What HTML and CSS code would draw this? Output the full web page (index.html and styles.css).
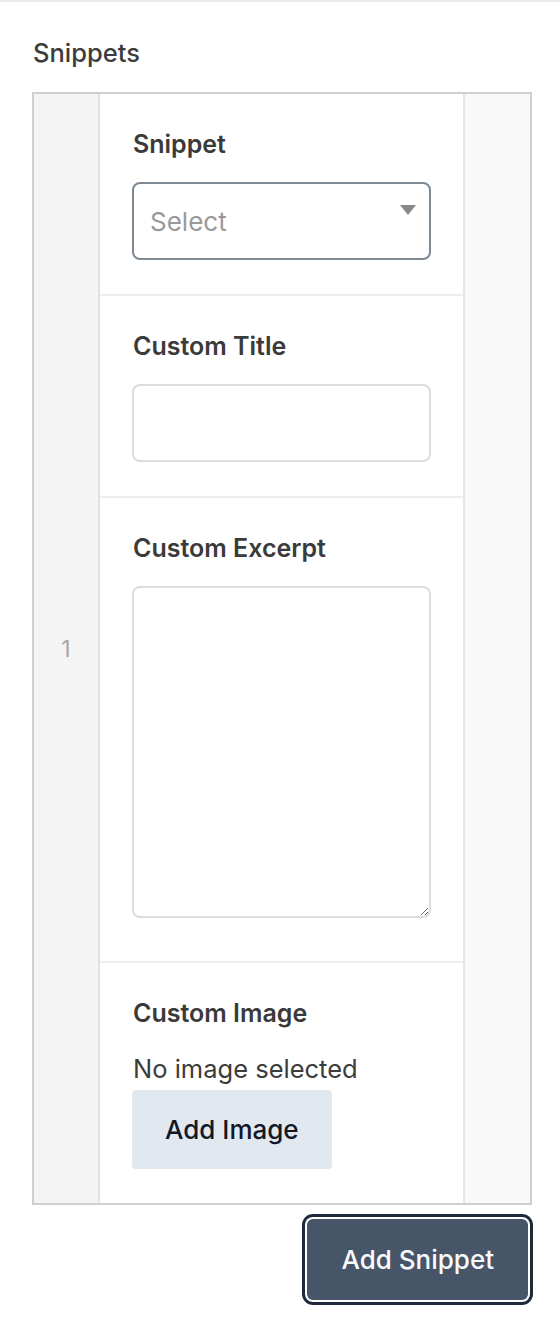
FILE: index.html
```html
<!DOCTYPE html>
<html lang="en">
<head>
    <meta charset="UTF-8">
    <meta name="viewport" content="width=device-width, initial-scale=1.0">
    <title>Snippets</title>
    <link rel="stylesheet" href="styles.css">
</head>
<body>

    <div class="panel">
        <div class="panel-label">Snippets</div>

        <div class="repeater">
            <!-- row number -->
            <div class="row-handle">1</div>

            <div class="row-fields">
                <div class="field">
                    <label class="field-label">Snippet</label>
                    <div class="select-box">
                        <span class="placeholder">Select</span>
                        <span class="select-arrow"></span>
                    </div>
                </div>

                <div class="field">
                    <label class="field-label">Custom Title</label>
                    <input class="text-input" type="text">
                </div>

                <div class="field">
                    <label class="field-label">Custom Excerpt</label>
                    <textarea class="text-area"></textarea>
                </div>

                <div class="field">
                    <label class="field-label">Custom Image</label>
                    <p class="no-image">No image selected</p>
                    <button class="btn-light">Add Image</button>
                </div>
            </div>

            <div class="row-actions"></div>
        </div>

        <div class="repeater-footer">
            <button class="btn-dark">Add Snippet</button>
        </div>
    </div>

</body>
</html>
```

FILE: styles.css
```css
body {
    margin: 0;
    font-family: Inter, "Noto Sans", Arial, sans-serif;
    background-color: #fff;
    color: #3c3c3c;
}

.panel {
    border-top: 2px solid #ebebef;
    padding: 33px 28px 40px 32px;
}

.panel-label {
    font-size: 25.5px;
    font-weight: 500;
    line-height: 36px;
    margin-left: 1px;
    margin-bottom: 21px;
}

/* repeater table */
.repeater {
    display: grid;
    grid-template-columns: 66px 1fr 65px;
    border: 2px solid #ccd0d4;
}

.row-handle {
    background-color: #f4f4f4;
    border-right: 2px solid #e1e1e1;
    display: flex;
    justify-content: center;
    align-items: center;
    color: #a7a7a7;
    font-size: 23px;
}

.row-fields {
    border-right: 2px solid #e6e6e6;
}

.row-actions {
    background-color: #f9f9f9;
}

.field {
    padding: 32px 32px 34px 32px;
}

.field + .field {
    border-top: 2px solid #ededf0;
}

.field-label {
    display: block;
    font-size: 25px;
    font-weight: 600;
    line-height: 36px;
    margin-bottom: 20px;
    margin-left: 1px;
    color: #3a3a3a;
}

.select-box {
    position: relative;
    height: 78px;
    box-sizing: border-box;
    border: 2px solid #7e8993;
    border-radius: 8px;
    display: flex;
    align-items: center;
    padding-left: 16px;
}

.placeholder {
    font-size: 26px;
    color: #999;
}

.select-arrow {
    position: absolute;
    top: 21px;
    right: 13px;
    border-left: 8px solid transparent;
    border-right: 8px solid transparent;
    border-top: 10px solid #888;
}

.text-input,
.text-area {
    display: block;
    width: 100%;
    box-sizing: border-box;
    border: 2px solid #dcdcde;
    border-radius: 8px;
    font-family: inherit;
    font-size: 26px;
    margin: 0;
}

.text-input {
    height: 78px;
}

.text-area {
    height: 332px;
    margin-bottom: 9px;
}

.no-image {
    margin: 0 0 3px 1px;
    font-size: 25.5px;
    line-height: 36px;
    color: #3c3c3c;
}

.btn-light {
    background-color: #e2e8f0;
    color: #111827;
    border: none;
    border-radius: 4px;
    font-family: inherit;
    font-size: 26px;
    font-weight: 500;
    height: 79px;
    padding: 0 33px;
}

.repeater-footer {
    display: flex;
    justify-content: flex-end;
    padding: 14px 4px 0 0;
}

.btn-dark {
    background-color: #475569;
    color: #f8fafc;
    border: none;
    border-radius: 6px;
    font-family: inherit;
    font-size: 26px;
    font-weight: 500;
    height: 81px;
    padding: 0 34px;
    box-shadow: 0 0 0 2px #fff, 0 0 0 5px #1e293b;
}
```
